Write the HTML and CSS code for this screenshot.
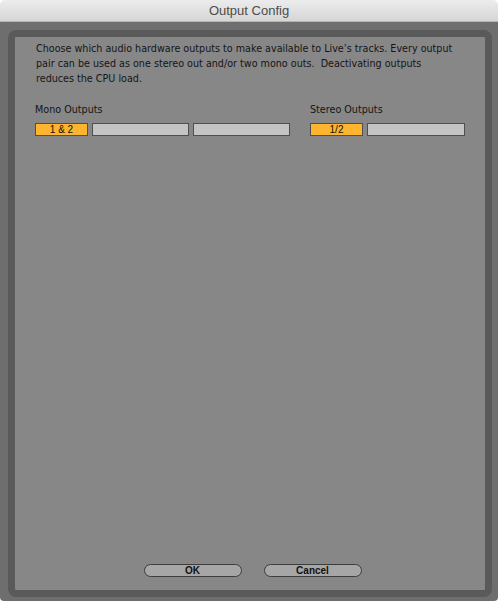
FILE: index.html
```html
<!DOCTYPE html>
<html>
<head>
<meta charset="utf-8">
<link rel="stylesheet" href="styles.css">
</head>
<body>
<div class="window">
  <div class="titlebar">Output Config</div>
  <div class="frame">
    <div class="panel">
      <p class="intro">Choose which audio hardware outputs to make available to Live’s tracks. Every output pair can be used as one stereo out and/or two mono outs.&nbsp; Deactivating outputs reduces the CPU load.</p>
      <div class="groups">
        <div class="group mono">
          <div class="group-label">Mono Outputs</div>
          <div class="toggles">
            <div class="toggle on short">1 &amp; 2</div>
            <div class="toggle long"></div>
            <div class="toggle long"></div>
          </div>
        </div>
        <div class="group stereo">
          <div class="group-label">Stereo Outputs</div>
          <div class="toggles">
            <div class="toggle on short">1/2</div>
            <div class="toggle long"></div>
          </div>
        </div>
      </div>
      <div class="actions">
        <button class="btn">OK</button>
        <button class="btn">Cancel</button>
      </div>
    </div>
  </div>
</div>
</body>
</html>
```

FILE: styles.css
```css
html, body {
  margin: 0;
  padding: 0;
  background: #ffffff;
}
.window {
  width: 498px;
  height: 601px;
  display: flex;
  flex-direction: column;
  border-radius: 5px 5px 4px 4px;
  overflow: hidden;
  font-family: "DejaVu Sans", Verdana, sans-serif;
}
.titlebar {
  height: 22px;
  flex: none;
  background: linear-gradient(#ececec, #d6d6d6);
  border-bottom: 1px solid #b4b4b4;
  box-sizing: border-box;
  color: #4c4c4c;
  font-family: "Liberation Sans", Arial, sans-serif;
  font-size: 13px;
  line-height: 22px;
  text-align: center;
}
.frame {
  flex: 1;
  background: #6e6e6e;
  padding: 8px 6px 4px 8px;
  display: flex;
}
.panel {
  flex: 1;
  background: #878787;
  border: 7px solid #5a5a5a;
  border-radius: 8px;
  display: flex;
  flex-direction: column;
  padding: 4px 20px 13px 21px;
}
.intro {
  margin: 0;
  max-width: 424px;
  font-size: 9.6px;
  line-height: 15px;
  color: #151515;
}
.groups {
  display: flex;
  gap: 20px;
  margin-top: 16px;
}
.group-label {
  font-size: 9.6px;
  line-height: 15px;
  color: #151515;
  margin-bottom: 6px;
}
.mono { width: 255px; margin-left: -1px; }
.toggles {
  display: flex;
  gap: 4px;
}
.toggle {
  height: 13px;
  box-sizing: border-box;
  border: 1px solid #4e4e4e;
  background: #c4c4c4;
  font-family: "Liberation Sans", Arial, sans-serif;
  font-size: 10px;
  line-height: 11px;
  text-align: center;
  color: #111;
}
.toggle.on { background: #fdb42e; }
.toggle.short { width: 53px; }
.mono .toggle.long { width: 97px; }
.stereo .toggle.long { width: 98px; }
.actions {
  margin-top: auto;
  display: flex;
  justify-content: center;
  gap: 22px;
  padding-left: 4px;
}
.btn {
  width: 98px;
  height: 13px;
  box-sizing: border-box;
  border: 1px solid #3c3c3c;
  border-radius: 7px;
  background: #a6a6a6;
  padding: 0;
  font-family: "Liberation Sans", Arial, sans-serif;
  font-weight: bold;
  font-size: 10px;
  line-height: 11px;
  color: #111;
}
```
